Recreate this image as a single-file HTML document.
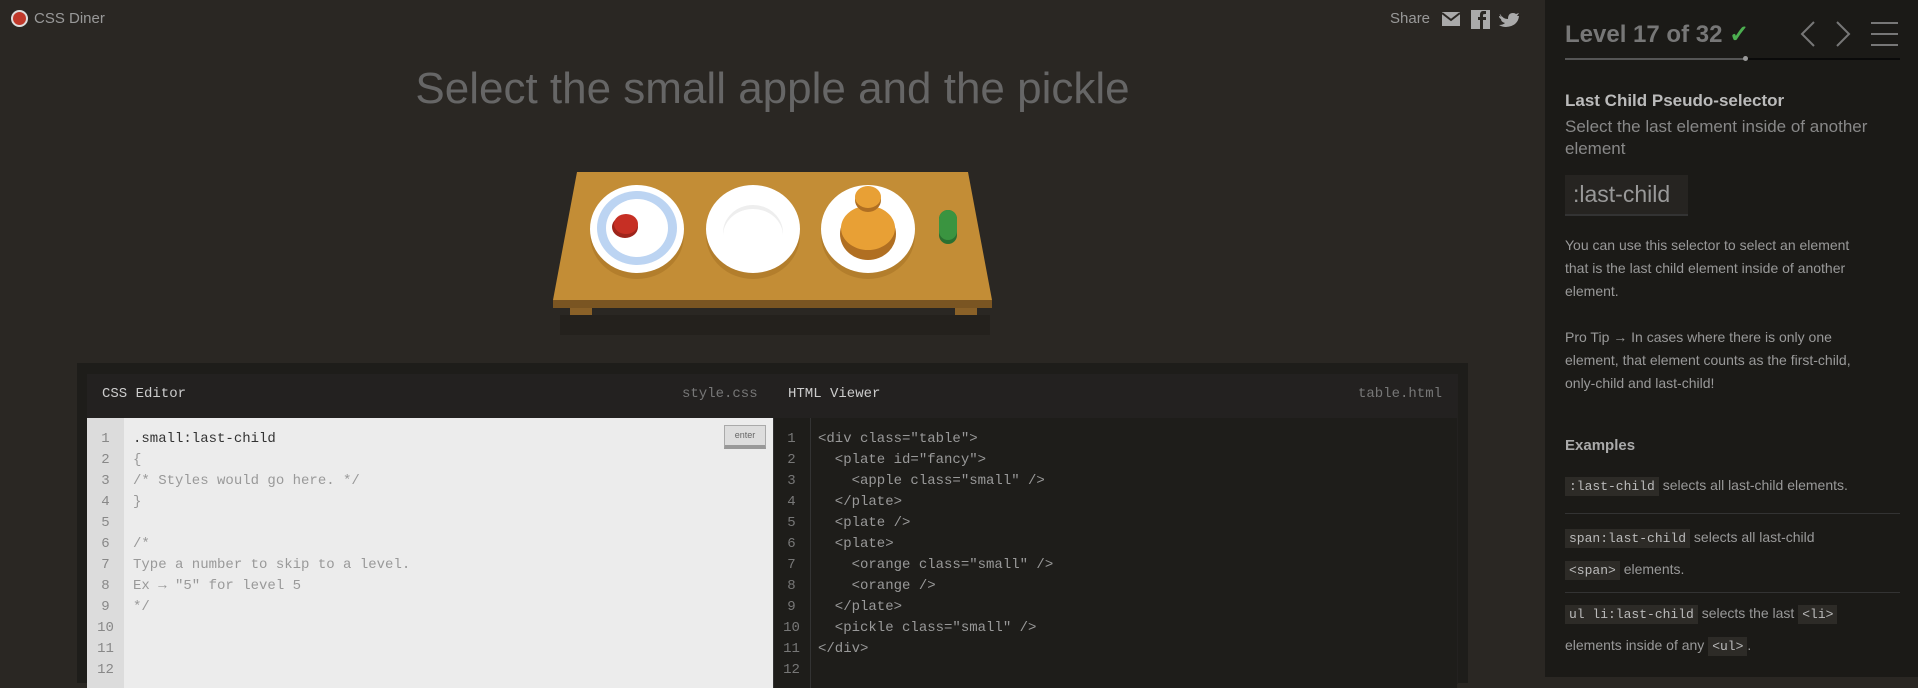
<!DOCTYPE html>
<html><head><meta charset="utf-8"><style>
*{margin:0;padding:0;box-sizing:border-box}
body{width:1918px;height:677px;overflow:hidden;background:#2a2723;font-family:"Liberation Sans",sans-serif;position:relative;color:#999}
.abs{position:absolute}
.mono{font-family:"Liberation Mono",monospace}
#side{left:1545px;top:0;width:373px;height:677px;background:#1b1a17}
.code{background:#2d2b27;color:#bbb;font-family:"Liberation Mono",monospace;font-size:13px;padding:2px 4px}
.ln{position:absolute;left:0;width:37px;text-align:center;font-size:14px;font-family:"Liberation Mono",monospace}
</style></head><body>
<div class="abs" style="left:11px;top:10px;width:17px;height:17px;border-radius:50%;background:#c0392b;border:2px solid #ddd"></div>
<div class="abs" style="left:34px;top:10px;font-size:15px;color:#999">CSS Diner</div>
<div class="abs" style="left:1390px;top:10px;font-size:15px;color:#999">Share</div>
<svg class="abs" style="left:1442px;top:10px" width="80" height="20"><rect x="0" y="2" width="18" height="14" fill="#aaa"/><path d="M0 3 L9 10 L18 3" stroke="#2a2723" stroke-width="2" fill="none"/><rect x="29" y="0" width="19" height="19" fill="#aaa"/><path d="M41 19 V10 H44 V7 H41 V5 Q41 4 43 4 H44 V1 H41 Q38 1 38 5 V7 H36 V10 H38 V19Z" fill="#2a2723"/><path d="M58 4 Q61 9 66 9 Q66 3 71 3 Q73 3 74 4 L77 3 L75 6 L77 6 Q76 16 64 17 Q60 17 57 15 Q61 15 63 13 Q59 12 59 9 Q57 8 57 6 Q58 6 60 7 Q57 5 58 4Z" fill="#aaa"/></svg>
<div class="abs" style="left:0;width:1545px;top:64px;text-align:center;font-size:44px;color:#666">Select the small apple and the pickle</div>
<svg class="abs" style="left:540px;top:160px" width="480" height="180">
<rect x="20" y="155" width="430" height="20" fill="#24211d"/>
<polygon points="37,12 428,12 452,140 13,140" fill="#c38d36"/>
<rect x="13" y="140" width="439" height="8" fill="#7a5522"/>
<rect x="30" y="148" width="22" height="7" fill="#8a6128"/><rect x="415" y="148" width="22" height="7" fill="#8a6128"/>
<ellipse cx="97" cy="75" rx="47" ry="44" fill="#a87526" opacity=".6"/>
<ellipse cx="97" cy="69" rx="47" ry="44" fill="#fff"/><ellipse cx="97" cy="68" rx="40" ry="37" fill="#bcd4f2"/><ellipse cx="97" cy="68" rx="31" ry="29" fill="#fff"/>
<ellipse cx="85" cy="67" rx="13" ry="11" fill="#9e241b"/><ellipse cx="86" cy="64" rx="12" ry="10" fill="#c62f24"/>
<ellipse cx="213" cy="75" rx="47" ry="44" fill="#a87526" opacity=".6"/>
<ellipse cx="213" cy="69" rx="47" ry="44" fill="#fff"/><ellipse cx="213" cy="73" rx="30" ry="28" fill="#eee"/><ellipse cx="213" cy="76" rx="30" ry="27" fill="#fff"/>
<ellipse cx="328" cy="75" rx="47" ry="44" fill="#a87526" opacity=".6"/>
<ellipse cx="328" cy="69" rx="47" ry="44" fill="#fff"/>
<ellipse cx="328" cy="74" rx="28" ry="26" fill="#b06f22"/><ellipse cx="328" cy="68" rx="27" ry="22" fill="#e8a035"/>
<ellipse cx="328" cy="40" rx="13" ry="12" fill="#b06f22"/><ellipse cx="328" cy="37" rx="13" ry="11" fill="#e8a035"/>
<rect x="399" y="50" width="18" height="34" rx="9" fill="#2a7030"/><rect x="399" y="50" width="18" height="30" rx="9" fill="#3a9440"/>
</svg>
<div class="abs" style="left:77px;top:363px;width:1391px;height:320px;background:#1e1d1a"></div>
<div class="abs" style="left:87px;top:374px;width:1371px;height:310px;background:#232120"></div>
<div class="abs mono" style="left:102px;top:386px;font-size:14px;color:#ccc">CSS Editor</div>
<div class="abs mono" style="left:682px;top:386px;font-size:14px;color:#777">style.css</div>
<div class="abs mono" style="left:788px;top:386px;font-size:14px;color:#ccc">HTML Viewer</div>
<div class="abs mono" style="left:1358px;top:386px;font-size:14px;color:#777">table.html</div>
<div class="abs" style="left:87px;top:418px;width:686px;height:270px;background:#ececec"></div>
<div class="abs" style="left:87px;top:418px;width:37px;height:270px;background:#dcdcdc"></div>
<div class="abs" style="left:724px;top:425px;width:42px;height:24px;background:#ddd;border:1px solid #aaa;border-bottom:4px solid #999;font-size:9px;color:#666;text-align:center;line-height:18px" >enter</div>
<div class="abs" style="left:773px;top:418px;width:684px;height:270px;background:#1e1d1a;border-left:1px solid #333"></div>
<div class="abs" style="left:773px;top:418px;width:38px;height:270px;border-right:1px solid #333"></div>
<div class="abs" style="left:87px;top:429px;line-height:21px;color:#888">
<div class="ln" style="top:0">1</div><div class="ln" style="top:21px">2</div><div class="ln" style="top:42px">3</div><div class="ln" style="top:63px">4</div><div class="ln" style="top:84px">5</div><div class="ln" style="top:105px">6</div><div class="ln" style="top:126px">7</div><div class="ln" style="top:147px">8</div><div class="ln" style="top:168px">9</div><div class="ln" style="top:189px">10</div><div class="ln" style="top:210px">11</div><div class="ln" style="top:231px">12</div></div>
<pre class="abs mono" style="left:133px;top:429px;font-size:14px;line-height:21px;color:#999"><span style="color:#333">.small:last-child</span>
{
/* Styles would go here. */
}

/*
Type a number to skip to a level.
Ex → "5" for level 5
*/</pre>
<div class="abs" style="left:773px;top:429px;line-height:21px;color:#777">
<div class="ln" style="top:0">1</div><div class="ln" style="top:21px">2</div><div class="ln" style="top:42px">3</div><div class="ln" style="top:63px">4</div><div class="ln" style="top:84px">5</div><div class="ln" style="top:105px">6</div><div class="ln" style="top:126px">7</div><div class="ln" style="top:147px">8</div><div class="ln" style="top:168px">9</div><div class="ln" style="top:189px">10</div><div class="ln" style="top:210px">11</div><div class="ln" style="top:231px">12</div></div>
<pre class="abs mono" style="left:818px;top:429px;font-size:14px;line-height:21px;color:#999">&lt;div class="table"&gt;
  &lt;plate id="fancy"&gt;
    &lt;apple class="small" /&gt;
  &lt;/plate&gt;
  &lt;plate /&gt;
  &lt;plate&gt;
    &lt;orange class="small" /&gt;
    &lt;orange /&gt;
  &lt;/plate&gt;
  &lt;pickle class="small" /&gt;
&lt;/div&gt;</pre>
<div id="side" class="abs"></div>
<div class="abs" style="left:1565px;top:20px;font-size:24px;font-weight:bold;color:#777">Level 17 of 32 <span style="color:#4caf50">✓</span></div>
<svg class="abs" style="left:1795px;top:18px" width="110" height="30"><path d="M19 4 L7 16 L19 28 M42 4 L54 16 L42 28" stroke="#777" stroke-width="2" fill="none"/><path d="M76 5 H103 M76 16 H103 M76 27 H103" stroke="#777" stroke-width="2"/></svg>
<div class="abs" style="left:1565px;top:58px;width:180px;height:2px;background:#555"></div>
<div class="abs" style="left:1745px;top:58px;width:155px;height:2px;background:#0a0a0a"></div>
<div class="abs" style="left:1743px;top:56px;width:5px;height:5px;border-radius:50%;background:#999"></div>
<div class="abs" style="left:1565px;top:91px;font-size:17px;font-weight:bold;color:#bbb">Last Child Pseudo-selector</div>
<div class="abs" style="left:1565px;top:116px;width:330px;font-size:17px;line-height:22px;color:#888">Select the last element inside of another element</div>
<div class="abs" style="left:1565px;top:175px;width:123px;height:41px;background:#262421;border-bottom:2px solid #333;font-size:23px;color:#999;padding:6px 0 0 8px">:last-child</div>
<div class="abs" style="left:1565px;top:234px;width:310px;font-size:14px;line-height:23px;color:#999">You can use this selector to select an element that is the last child element inside of another element.<br><br>Pro Tip → In cases where there is only one element, that element counts as the first-child, only-child and last-child!</div>
<div class="abs" style="left:1565px;top:437px;font-size:15px;font-weight:bold;color:#aaa">Examples</div>
<div class="abs" style="left:1565px;top:477px;font-size:14px;color:#999"><span class="code">:last-child</span> selects all last-child elements.</div>
<div class="abs" style="left:1565px;top:513px;width:335px;height:1px;background:#333"></div>
<div class="abs" style="left:1565px;top:522px;width:285px;font-size:14px;line-height:30px;color:#999"><span class="code">span:last-child</span> selects all last-child <span class="code">&lt;span&gt;</span> elements.</div>
<div class="abs" style="left:1565px;top:592px;width:335px;height:1px;background:#333"></div>
<div class="abs" style="left:1565px;top:598px;width:300px;font-size:14px;line-height:30px;color:#999"><span class="code">ul li:last-child</span> selects the last <span class="code">&lt;li&gt;</span> elements inside of any <span class="code">&lt;ul&gt;</span>.</div>
</body></html>
